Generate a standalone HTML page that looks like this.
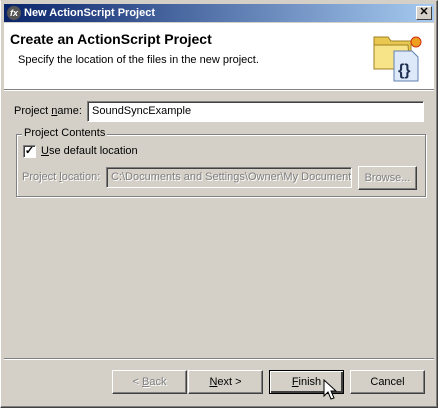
<!DOCTYPE html>
<html><head><style>
body{margin:0;width:438px;height:408px;overflow:hidden;font-family:"Liberation Sans",sans-serif;font-size:11px;color:#000}
*{white-space:nowrap}
.win{position:absolute;left:0;top:0;width:436px;height:406px;background:#d4d0c8;border-top:1px solid #d4d0c8;border-left:1px solid #fff;border-right:1px solid #404040;border-bottom:1px solid #404040;box-shadow:inset -1px -1px #808080}
.a{position:absolute}
.title{left:3px;top:3px;width:430px;height:18px;background:linear-gradient(90deg,#0a246a,#a6caf0);color:#fff;font-weight:bold;font-size:11px;line-height:18px}
.hdr{left:3px;top:22px;width:430px;height:66px;background:#fff;border-bottom:1px solid #808080;box-shadow:0 1px #fff}
.in{background:#fff;border:1px solid;border-color:#808080 #fff #fff #808080;box-shadow:inset 1px 1px #404040;height:21px;line-height:19px;padding-left:4px;box-sizing:border-box;overflow:hidden}
.btn{border:1px solid;border-color:#fff #404040 #404040 #fff;box-shadow:inset -1px -1px #808080;text-align:center;box-sizing:border-box;background:#d4d0c8;height:24px;line-height:22px}
.dis{color:#808080;text-shadow:1px 1px #fff}
</style></head><body>
<div class="win">
<div class="a title"><span style="display:inline-block;width:14px;height:14px;border-radius:7px;background:#555;margin:2px 3px 0 3px;vertical-align:top;color:#fff;font-size:9px;line-height:14px;text-align:center;font-style:italic">fx</span>New ActionScript Project
<span class="a" style="right:2px;top:2px;width:16px;height:14px;background:#d4d0c8;border:1px solid;border-color:#fff #404040 #404040 #fff;box-sizing:border-box;color:#000;font-size:11px;line-height:11px;text-align:center">✕</span></div>
<div class="a hdr">
<div class="a" style="left:6px;top:8px;font-weight:bold;font-size:14px">Create an ActionScript Project</div>
<div class="a" style="left:14px;top:31px">Specify the location of the files in the new project.</div>
<svg class="a" style="left:368px;top:8px" width="52" height="52" viewBox="0 0 52 52">
<path d="M2 6h14l3 4h20v26H2z" fill="#e8c850" stroke="#a08020"/>
<path d="M2 14h34l2 24H2z" fill="#f8e488" stroke="#a08020"/>
<path d="M22 20h18l6 6v24H22z" fill="#dde8f8" stroke="#6080b0"/>
<text x="26" y="44" font-size="16" font-weight="bold" fill="#203050" font-family="Liberation Sans">{}</text>
<circle cx="44" cy="11" r="5" fill="#f0a020" stroke="#d03010"/>
</svg>
</div>
<div class="a" style="left:13px;top:104px">Project <u>n</u>ame:</div>
<div class="a in" style="left:86px;top:100px;width:337px">SoundSyncExample</div>
<div class="a" style="left:15px;top:133px;width:408px;height:61px;border:1px solid #808080;box-shadow:1px 1px #fff,inset 1px 1px #fff"></div>
<div class="a" style="left:21px;top:126px;background:#d4d0c8;padding:0 2px">Project Contents</div>
<div class="a" style="left:22px;top:144px;width:13px;height:13px;background:#fff;border:1px solid;border-color:#808080 #fff #fff #808080;box-sizing:border-box;box-shadow:inset 1px 1px #404040;font-size:11px;line-height:10px;text-align:center;font-weight:bold">✓</div>
<div class="a" style="left:40px;top:144px"><u>U</u>se default location</div>
<div class="a dis" style="left:21px;top:170px">Project <u>l</u>ocation:</div>
<div class="a in dis" style="left:105px;top:166px;width:246px;background:#d4d0c8">C:\Documents and Settings\Owner\My Document</div>
<div class="a btn dis" style="left:357px;top:165px;width:59px">Browse...</div>
<div class="a" style="left:3px;top:357px;width:430px;border-top:1px solid #808080;border-bottom:1px solid #fff"></div>
<div class="a btn dis" style="left:111px;top:369px;width:75px">&lt; <u>B</u>ack</div>
<div class="a btn" style="left:187px;top:369px;width:75px"><u>N</u>ext &gt;</div>
<div class="a btn" style="left:268px;top:369px;width:75px;border:1px solid #000;box-shadow:inset 1px 1px #fff,inset -2px -2px #404040"><u>F</u>inish</div>
<div class="a btn" style="left:349px;top:369px;width:75px">Cancel</div>
<svg class="a" style="left:322px;top:378px" width="14" height="22" viewBox="0 0 14 22"><path d="M1 1v16l4-4 3 7 3-1-3-7h5z" fill="#fff" stroke="#000"/></svg>
</div>
</body></html>
